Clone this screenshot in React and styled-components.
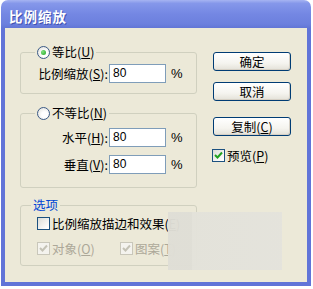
import React from "react";
import styled, { createGlobalStyle } from "styled-components";

const Global = createGlobalStyle`
  html, body { margin: 0; padding: 0; background: #ffffff; }
  body { font-family: "Noto Sans CJK SC", "Noto Sans", sans-serif; font-size: 12.5px; color: #000; }
  * { box-sizing: border-box; }
`;

const Window = styled.div`
  margin-left: 1px;
  width: 310px;
`;

const TitleBar = styled.div`
  height: 28px;
  border-radius: 7px 7px 0 0;
  background: linear-gradient(180deg, #a6b4f2 0%, #8597ea 12%, #7487e3 50%, #6c80de 85%, #6276d6 100%);
  display: flex;
  align-items: center;
  padding: 3px 0 0 8px;
`;

const Title = styled.span`
  color: #ffffff;
  font-weight: 700;
  font-size: 13.5px;
  letter-spacing: 1px;
  text-shadow: 1px 1px 0 #4052b0;
`;

const Body = styled.div`
  position: relative;
  height: 258px;
  background: #ece9d8;
  border: 4px solid #6174d8;
  border-top: 0;
  display: flex;
  padding: 16px 0 0 15px;
`;

const LeftCol = styled.div`
  width: 177px;
  display: flex;
  flex-direction: column;
`;

const RightCol = styled.div`
  margin-left: 16px;
  padding-top: 8px;
  display: flex;
  flex-direction: column;
  align-items: flex-start;
`;

const Group = styled.fieldset`
  margin: ${(p) => p.$mt || 0}px 0 0 0;
  padding: 0;
  min-width: 0;
  height: ${(p) => p.$h}px;
  border: 1px solid #d0d0bf;
  border-radius: 3px;
`;

const Legend = styled.legend`
  margin-left: ${(p) => p.$offset}px;
  padding: 0 2px;
  line-height: 16px;
  height: 16px;
  display: flex;
  align-items: center;
  gap: 2px;
  color: ${(p) => p.$color || "#000"};
`;

const Radio = styled.span`
  width: 13px;
  height: 13px;
  border-radius: 50%;
  border: 1px solid #3b5a86;
  background: radial-gradient(circle at 60% 60%, #ffffff 30%, #dcdcd6 100%);
  display: flex;
  align-items: center;
  justify-content: center;
  &::after {
    content: "";
    width: 5px;
    height: 5px;
    border-radius: 50%;
    background: ${(p) => (p.$on ? "radial-gradient(circle at 35% 35%, #7ee27e, #21a121)" : "transparent")};
  }
`;

const FormGrid = styled.div`
  padding: ${(p) => p.$pt}px 0 0 16px;
  display: grid;
  grid-template-columns: 72px 57px auto;
  row-gap: ${(p) => p.$gap || 0}px;
  align-items: center;
`;

const FieldLabel = styled.span`
  text-align: right;
  white-space: nowrap;
  padding-right: 1px;
`;

const Input = styled.div`
  height: 19px;
  border: 1px solid #7f9db9;
  background: #ffffff;
  padding: 0 3px;
  line-height: 17px;
  font-family: "Liberation Sans", "Noto Sans", sans-serif;
  font-size: 12px;
`;

const Unit = styled.span`
  padding-left: 5px;
  font-family: "Liberation Sans", sans-serif;
  font-size: 13px;
`;

const OptionList = styled.div`
  padding: 2px 0 0 16px;
  display: flex;
  flex-direction: column;
  gap: 9px;
`;

const CheckRow = styled.div`
  display: flex;
  align-items: center;
  height: 16px;
`;

const CheckItem = styled.label`
  display: flex;
  align-items: center;
  gap: 2px;
  width: ${(p) => (p.$w ? `${p.$w}px` : "auto")};
  white-space: nowrap;
  color: ${(p) => (p.$disabled ? "#aca899" : "#000")};
`;

const Box = styled.span`
  width: 13px;
  height: 13px;
  flex: none;
  border: 1px solid ${(p) => (p.$disabled ? "#c9c7ba" : "#1c5180")};
  background: ${(p) => (p.$disabled ? "#f4f3ee" : "linear-gradient(135deg, #dcdcd7 0%, #ffffff 90%)")};
  display: flex;
  align-items: center;
  justify-content: center;
`;

const Button = styled.button`
  width: 78px;
  height: 19px;
  padding: 0;
  border: 1px solid #003c74;
  border-radius: 3px;
  background: linear-gradient(180deg, #ffffff 0%, #f5f4ef 60%, #e3e1d8 100%);
  box-shadow: inset -1px -1px 0 #d6d0c5;
  font-family: "Noto Sans CJK SC", sans-serif;
  font-size: 12.5px;
  line-height: 17px;
  color: #000;
  margin-top: ${(p) => p.$mt || 0}px;
`;

const PreviewRow = styled(CheckRow)`
  margin-top: 11px;
  margin-left: -1px;
`;

const Smudge = styled.div`
  position: absolute;
  left: 163px;
  top: 184px;
  width: 114px;
  height: 58px;
  background: linear-gradient(90deg, #dfded6 0%, #dfded6 21%, #e3e2da 21%, #e4e3dc 100%);
  opacity: 0.97;
`;

const Check = ({ disabled }) => (
  <svg width="9" height="9" viewBox="0 0 9 9">
    <path d="M1 4 L3.5 6.5 L8 1.5" fill="none" stroke={disabled ? "#c4c2b5" : "#21a121"} strokeWidth="2" />
  </svg>
);

const CheckBox = ({ checked, disabled }) => (
  <Box $disabled={disabled}>{checked && <Check disabled={disabled} />}</Box>
);

export default function App() {
  return (
    <>
      <Global />
      <Window>
        <TitleBar>
          <Title>比例缩放</Title>
        </TitleBar>
        <Body>
          <LeftCol>
            <Group $h={50}>
              <Legend $offset={14}>
                <Radio $on />
                <span>等比(<u>U</u>)</span>
              </Legend>
              <FormGrid $pt={4}>
                <FieldLabel>比例缩放(<u>S</u>):</FieldLabel>
                <Input>80</Input>
                <Unit>%</Unit>
              </FormGrid>
            </Group>
            <Group $h={83} $mt={11}>
              <Legend $offset={14}>
                <Radio />
                <span>不等比(<u>N</u>)</span>
              </Legend>
              <FormGrid $pt={7} $gap={8}>
                <FieldLabel>水平(<u>H</u>):</FieldLabel>
                <Input>80</Input>
                <Unit>%</Unit>
                <FieldLabel>垂直(<u>V</u>):</FieldLabel>
                <Input>80</Input>
                <Unit>%</Unit>
              </FormGrid>
            </Group>
            <Group $h={69} $mt={9}>
              <Legend $offset={10} $color="#0046d5">选项</Legend>
              <OptionList>
                <CheckRow>
                  <CheckItem>
                    <CheckBox />
                    <span>比例缩放描边和效果(<u>E</u>)</span>
                  </CheckItem>
                </CheckRow>
                <CheckRow>
                  <CheckItem $w={83} $disabled>
                    <CheckBox checked disabled />
                    <span>对象(<u>O</u>)</span>
                  </CheckItem>
                  <CheckItem $disabled>
                    <CheckBox checked disabled />
                    <span>图案(<u>T</u>)</span>
                  </CheckItem>
                </CheckRow>
              </OptionList>
            </Group>
          </LeftCol>
          <RightCol>
            <Button>确定</Button>
            <Button $mt={11}>取消</Button>
            <Button $mt={16}>复制(<u>C</u>)</Button>
            <PreviewRow>
              <CheckItem>
                <CheckBox checked />
                <span>预览(<u>P</u>)</span>
              </CheckItem>
            </PreviewRow>
          </RightCol>
          <Smudge />
        </Body>
      </Window>
    </>
  );
}
